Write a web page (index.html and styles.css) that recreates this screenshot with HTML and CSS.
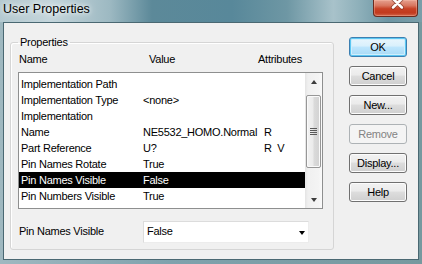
FILE: index.html
```html
<!DOCTYPE html>
<html lang="en">
<head>
  <meta charset="UTF-8" />
  <title>User Properties</title>
  <link rel="stylesheet" href="styles.css">
</head>
<body>

  <div class="window">

    <div class="titlebar">
      <span class="title">User Properties</span>
      <button class="close" aria-label="Close">
        <svg width="45" height="17" viewBox="0 0 45 17">
          <path d="M20.5 -1.5 L29.5 7.5 M29.5 -1.5 L20.5 7.5" stroke="#6a2416" stroke-width="4.4" stroke-linecap="round" opacity="0.55" fill="none" />
          <path d="M20.5 -1.5 L29.5 7.5 M29.5 -1.5 L20.5 7.5" stroke="#ffffff" stroke-width="2.6" stroke-linecap="round" fill="none" />
        </svg>
      </button>
    </div>

    <div class="client">

      <fieldset class="group">
        <legend>Properties</legend>

        <div class="head">
          <span>Name</span>
          <span>Value</span>
          <span>Attributes</span>
        </div>

        <div class="listbox" role="list">
          <ul class="rows">
            <li class="row"><span>Implementation Path</span><span></span><span></span></li>
            <li class="row"><span>Implementation Type</span><span>&lt;none&gt;</span><span></span></li>
            <li class="row"><span>Implementation</span><span></span><span></span></li>
            <li class="row"><span>Name</span><span>NE5532_HOMO.Normal</span><span>R</span></li>
            <li class="row"><span>Part Reference</span><span>U?</span><span>R  V</span></li>
            <li class="row"><span>Pin Names Rotate</span><span>True</span><span></span></li>
            <li class="row selected"><span>Pin Names Visible</span><span>False</span><span></span></li>
            <li class="row"><span>Pin Numbers Visible</span><span>True</span><span></span></li>
          </ul>
          <div class="scrollbar">
            <div class="sb-btn up"></div>
            <div class="sb-track">
              <div class="thumb"><i class="grip"></i></div>
            </div>
            <div class="sb-btn down"></div>
          </div>
        </div>

        <div class="edit-row">
          <label>Pin Names Visible</label>
          <div class="combo"><span>False</span><i class="caret"></i></div>
        </div>
      </fieldset>

      <div class="buttons">
        <button class="btn default">OK</button>
        <button class="btn">Cancel</button>
        <button class="btn">New...</button>
        <button class="btn" disabled>Remove</button>
        <button class="btn">Display...</button>
        <button class="btn">Help</button>
      </div>

    </div>
  </div>

</body>
</html>
```

FILE: styles.css
```css
body {
  margin: 0;
  font-family: "Liberation Sans", Arial, sans-serif;
  font-size: 11px;
  color: #000;
  background: #fff;
}

/* Fensterrahmen */
.window {
  width: 422px;
  height: 264px;
  display: flex;
  flex-direction: column;
  background: linear-gradient(90deg, #9fb8c0 0, #7fa2ad 40%, #76999f 100%);
  overflow: hidden;
}
.titlebar {
  height: 22px;
  flex-shrink: 0;
  display: flex;
  align-items: flex-start;
  background: linear-gradient(90deg, #b4c9d0 0, #c4d5db 12%, #9db9c2 26%, #5c8999 36%, #58889a 55%, #6e97a4 68%, #a8c2ca 79%, #8eb0ba 85%, #6c95a3 92%, #7a9ea9 100%);
}
.title {
  padding-left: 3px;
  font-size: 12.5px;
  line-height: 19px;
  color: #000;
  text-shadow: 0 0 5px #fff, 0 0 9px rgba(255, 255, 255, 0.8);
}
.close {
  margin-left: auto;
  margin-right: 4px;
  width: 45px;
  height: 17px;
  padding: 0;
  border: 1px solid #6b2a1e;
  border-top: none;
  border-radius: 0 0 4px 4px;
  background: linear-gradient(#e6a08f 0, #d8765f 35%, #c74125 55%, #c23a1e 80%, #d2654a 100%);
  box-shadow: inset 0 0 0 1px rgba(255, 200, 180, 0.35);
  display: flex;
  overflow: hidden;
}
.close svg {
  margin-left: -1px;
}

/* Innenbereich */
.client {
  flex: 1;
  margin: 0 3px 4px;
  border: 1px solid #4a6872;
  background: #f0f0f0;
  display: flex;
  align-items: flex-start;
  gap: 15px;
  padding: 13px 11px 0 6px;
}

/* Gruppenfeld */
.group {
  width: 324px;
  box-sizing: border-box;
  margin: 0;
  padding: 4px 10px 6px 7px;
  border: 1px solid #d5d5d5;
  border-radius: 3px;
  box-shadow: inset 1px 1px 0 #fff;
}
.group legend {
  padding: 0 2px;
  line-height: 13px;
  letter-spacing: -0.25px;
}
.head {
  display: grid;
  grid-template-columns: 130px 109px 1fr;
  padding-left: 1px;
  line-height: 13px;
  margin-bottom: 6px;
  letter-spacing: -0.25px;
}

/* Liste */
.listbox {
  height: 137px;
  box-sizing: border-box;
  border: 1px solid #8e8f8f;
  background: #fff;
  display: flex;
}
.rows {
  flex: 1;
  margin: 0;
  padding: 3px 0 0;
  list-style: none;
}
.row {
  display: grid;
  grid-template-columns: 122px 121px 1fr;
  height: 16px;
  line-height: 16px;
  padding-left: 2px;
  letter-spacing: -0.25px;
  white-space: pre;
}
.row.selected {
  background: #000;
  color: #fff;
}

/* Bildlaufleiste */
.scrollbar {
  width: 17px;
  display: flex;
  flex-direction: column;
  background: linear-gradient(90deg, #e4e4e4, #f0f0f0 18%, #f4f4f4 82%, #fbfbfb);
}
.sb-btn {
  height: 17px;
  display: flex;
  align-items: center;
  justify-content: center;
}
.sb-btn::after {
  content: "";
  border-left: 3.5px solid transparent;
  border-right: 3.5px solid transparent;
}
.sb-btn.up::after {
  border-bottom: 4px solid #3c3c3c;
  margin-top: 1px;
}
.sb-btn.down::after {
  border-top: 4px solid #3c3c3c;
}
.sb-track {
  flex: 1;
}
.thumb {
  margin: 5px 1px 0 1px;
  height: 73px;
  box-sizing: border-box;
  border: 1px solid #979797;
  border-radius: 2px;
  background: linear-gradient(90deg, #f3f3f3, #ebebeb 45%, #dadada 55%, #d2d2d2);
  box-shadow: inset 0 0 0 1px #fafafa;
  display: flex;
  align-items: center;
  justify-content: center;
}
.grip {
  width: 7px;
  height: 7px;
  background: repeating-linear-gradient(#5a5a5a 0 1px, transparent 1px 2px);
}

/* Eingabezeile unten */
.edit-row {
  display: grid;
  grid-template-columns: 125px 166px;
  align-items: center;
  margin-top: 12px;
}
.edit-row label {
  padding-left: 1px;
  padding-bottom: 3px;
  letter-spacing: -0.25px;
}
.combo {
  height: 22px;
  box-sizing: border-box;
  border: 1px solid #dcdcdc;
  border-right-color: #ececec;
  border-bottom-color: #ececec;
  background: #fff;
  display: flex;
  align-items: center;
  padding: 0 3px 3px 3px;
  letter-spacing: -0.25px;
}
.caret {
  margin-left: auto;
  margin-top: 5px;
  border-left: 3.5px solid transparent;
  border-right: 3.5px solid transparent;
  border-top: 4px solid #000;
}

/* Schaltflächen */
.buttons {
  display: flex;
  flex-direction: column;
  gap: 9px;
  padding-top: 1px;
}
.btn {
  width: 58px;
  height: 20px;
  padding: 0;
  border: 1px solid #707070;
  border-radius: 3px;
  background: linear-gradient(#f2f2f2 0, #ebebeb 45%, #dddddd 50%, #cfcfcf 100%);
  box-shadow: inset 0 0 0 1px #fcfcfc;
  font-family: "Liberation Sans", Arial, sans-serif;
  font-size: 11px;
  letter-spacing: -0.25px;
  color: #000;
}
.btn.default {
  border-color: #3c7fb1;
  background: linear-gradient(#eaf6fd 0, #d9f0fc 45%, #bee6fd 50%, #a7d9f5 100%);
  box-shadow: inset 0 0 0 1px #5cc7f2, inset 0 0 0 2px #d0eefc;
}
.btn:disabled {
  border-color: #adb2b5;
  background: #f4f4f4;
  box-shadow: none;
  color: #838383;
}
```
